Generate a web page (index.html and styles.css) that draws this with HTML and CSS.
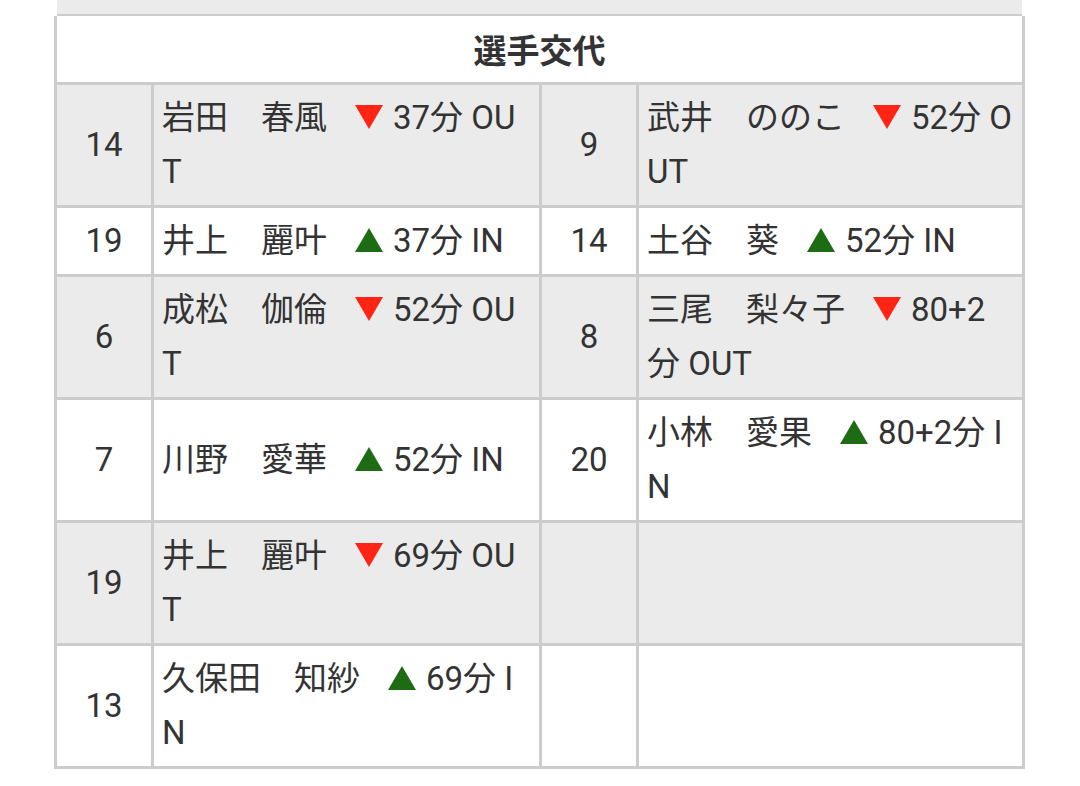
FILE: index.html
```html
<!DOCTYPE html>
<html lang="ja">
<head>
<meta charset="utf-8">
<title>選手交代</title>
<link rel="stylesheet" href="styles.css">
</head>
<body>
<div class="page">
  <div class="prev"></div>
  <div class="subs">
    <div class="head">選手交代</div>

    <div class="num g">14</div>
    <div class="name g"><p>岩田　春風<span class="mk dn"><svg viewBox="0 0 28 24"><polygon points="0,0 28,0 14,24"/></svg></span>37分 OUT</p></div>
    <div class="num g">9</div>
    <div class="name g"><p>武井　ののこ<span class="mk dn"><svg viewBox="0 0 28 24"><polygon points="0,0 28,0 14,24"/></svg></span>52分 OUT</p></div>

    <div class="num w">19</div>
    <div class="name w"><p>井上　麗叶<span class="mk up"><svg viewBox="0 0 28 24"><polygon points="14,0 28,24 0,24"/></svg></span>37分 IN</p></div>
    <div class="num w">14</div>
    <div class="name w"><p>土谷　葵<span class="mk up"><svg viewBox="0 0 28 24"><polygon points="14,0 28,24 0,24"/></svg></span>52分 IN</p></div>

    <div class="num g">6</div>
    <div class="name g"><p>成松　伽倫<span class="mk dn"><svg viewBox="0 0 28 24"><polygon points="0,0 28,0 14,24"/></svg></span>52分 OUT</p></div>
    <div class="num g">8</div>
    <div class="name g"><p>三尾　梨々子<span class="mk dn"><svg viewBox="0 0 28 24"><polygon points="0,0 28,0 14,24"/></svg></span>80+2分 OUT</p></div>

    <div class="num w">7</div>
    <div class="name w"><p>川野　愛華<span class="mk up"><svg viewBox="0 0 28 24"><polygon points="14,0 28,24 0,24"/></svg></span>52分 IN</p></div>
    <div class="num w">20</div>
    <div class="name w"><p>小林　愛果<span class="mk up"><svg viewBox="0 0 28 24"><polygon points="14,0 28,24 0,24"/></svg></span>80+2分 IN</p></div>

    <div class="num g">19</div>
    <div class="name g"><p>井上　麗叶<span class="mk dn"><svg viewBox="0 0 28 24"><polygon points="0,0 28,0 14,24"/></svg></span>69分 OUT</p></div>
    <div class="num g"></div>
    <div class="name g"></div>

    <div class="num w">13</div>
    <div class="name w"><p>久保田　知紗<span class="mk up"><svg viewBox="0 0 28 24"><polygon points="14,0 28,24 0,24"/></svg></span>69分 IN</p></div>
    <div class="num w"></div>
    <div class="name w"></div>
  </div>
</div>
</body>
</html>
```

FILE: styles.css
```css
html, body {
  margin: 0;
  padding: 0;
  background: #ffffff;
}

body {
  font-family: Roboto, "Noto Sans CJK JP", sans-serif;
  font-size: 33px;
  color: #333333;
}

.page {
  padding-left: 54px;
  width: 971px;
}

.prev {
  margin: 0 3px;
  height: 14px;
  background: #ebebeb;
  border-bottom: 2px solid #cccccc;
}

.subs {
  display: grid;
  grid-template-columns: 94px 385px 94px 383px;
  gap: 3px;
  padding: 0 3px 3px 3px;
  background: #cccccc;
}

.head {
  grid-column: 1 / -1;
  background: #ffffff;
  height: 66px;
  display: flex;
  align-items: center;
  justify-content: center;
  font-weight: bold;
}

.g { background: #ebebeb; }
.w { background: #ffffff; }

.num {
  display: flex;
  align-items: center;
  justify-content: center;
  line-height: 54px;
  padding: 6px 0;
}

.name {
  display: flex;
  align-items: center;
  line-height: 54px;
  padding: 6px 8px 6px 8px;
  min-height: 54px;
}

.name p {
  margin: 0;
  word-break: break-all;
  min-width: 0;
}

.mk {
  display: inline-block;
  width: 28px;
  height: 24px;
  margin: 0 10px 0 28px;
  vertical-align: 0px;
}

.mk svg {
  display: block;
  width: 28px;
  height: 24px;
}

.dn svg { fill: #ff2414; }
.up svg { fill: #1d6b12; }
```
